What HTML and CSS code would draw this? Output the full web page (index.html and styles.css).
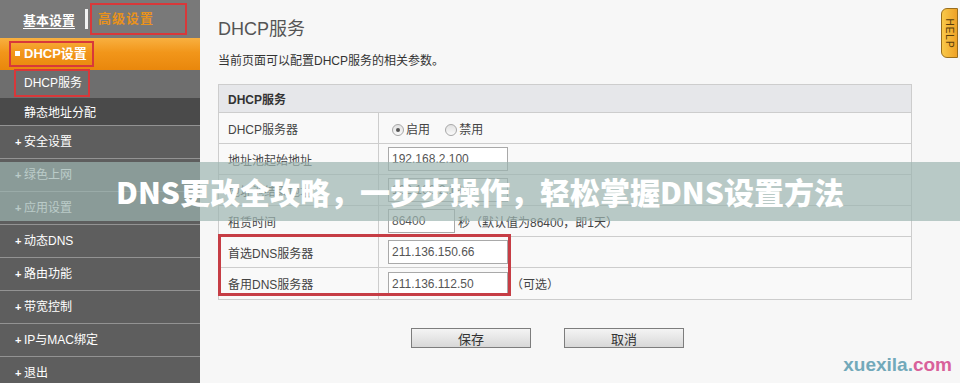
FILE: index.html
```html
<!DOCTYPE html>
<html lang="zh-CN">
<head>
    <meta charset="UTF-8">
    <title>DHCP服务</title>
    <link rel="stylesheet" href="styles.css">
</head>
<body>

    <aside class="sidebar">
        <div class="tabs">
            <span class="tab-basic">基本设置</span>
            <span class="tab-sep"></span>
            <span class="tab-adv mark">高级设置</span>
        </div>
        <div class="menu-active">
            <span class="mark"><i class="square"></i>DHCP设置</span>
        </div>
        <div class="sub-item sub-current"><span class="mark">DHCP服务</span></div>
        <div class="sub-item sub-dark">静态地址分配</div>
        <div class="menu-item">安全设置</div>
        <div class="menu-item">绿色上网</div>
        <div class="menu-item">应用设置</div>
        <div class="menu-item">动态DNS</div>
        <div class="menu-item">路由功能</div>
        <div class="menu-item">带宽控制</div>
        <div class="menu-item">IP与MAC绑定</div>
        <div class="menu-item">退出</div>
    </aside>

    <main class="content">
        <h1 class="title">DHCP服务</h1>
        <p class="intro">当前页面可以配置DHCP服务的相关参数。</p>

        <div class="table-wrap">
            <table class="form-table">
                <tr class="head-row">
                    <th colspan="2">DHCP服务</th>
                </tr>
                <tr>
                    <td class="label">DHCP服务器</td>
                    <td>
                        <span class="radio on"></span><span class="radio-text">启用</span>
                        <span class="radio"></span><span class="radio-text">禁用</span>
                    </td>
                </tr>
                <tr>
                    <td class="label">地址池起始地址</td>
                    <td><span class="field">192.168.2.100</span></td>
                </tr>
                <tr>
                    <td class="label">地址池结束地址</td>
                    <td><span class="field">192.168.2.199</span></td>
                </tr>
                <tr>
                    <td class="label">租赁时间</td>
                    <td><span class="field short">86400</span><span class="note">秒（默认值为86400，即1天）</span></td>
                </tr>
                <tr>
                    <td class="label">首选DNS服务器</td>
                    <td><span class="field">211.136.150.66</span></td>
                </tr>
                <tr class="last-row">
                    <td class="label">备用DNS服务器</td>
                    <td><span class="field">211.136.112.50</span><span class="note">（可选）</span></td>
                </tr>
            </table>
            <div class="dns-mark"></div>
        </div>

        <div class="buttons">
            <button class="btn">保存</button>
            <button class="btn">取消</button>
        </div>
    </main>

    <div class="help-tab"><span>HELP</span></div>

    <div class="banner">DNS更改全攻略，一步步操作，轻松掌握DNS设置方法</div>

    <div class="watermark"><span class="wm-a">xuexila.</span><span class="wm-b">com</span></div>

</body>
</html>
```

FILE: styles.css
```css
body {
    margin: 0;
    display: flex;
    height: 383px;
    overflow: hidden;
    background-color: #f7f7f7;
    font-family: 'Liberation Sans', Arial, 'Noto Sans CJK SC', sans-serif;
    font-size: 12px;
    color: #333;
}

/* barra lateral */
.sidebar {
    width: 200px;
    flex-shrink: 0;
    background-color: #5e5e5e;
    color: #fff;
}
.tabs {
    height: 38px;
    background-color: #797979;
    display: flex;
    align-items: center;
    padding-left: 23px;
}
.tab-basic {
    font-size: 13px;
    font-weight: bold;
    text-decoration: underline;
    text-underline-offset: 3px;
}
.tab-sep {
    width: 3px;
    height: 20px;
    background-color: #f2f2f2;
    margin: 0 2px 0 10px;
}
.mark {
    display: inline-block;
    border: 2px solid #d8383a;
}
.tab-adv {
    width: 87px;
    height: 28px;
    line-height: 28px;
    padding-left: 6px;
    box-sizing: content-box;
    color: #e8921c;
    font-size: 13px;
    font-weight: bold;
    letter-spacing: 1px;
}
.menu-active {
    height: 32px;
    background: linear-gradient(#f8b040, #f2961a 45%, #e9870c);
    display: flex;
    align-items: center;
    padding-left: 9px;
}
.menu-active .mark {
    height: 22px;
    line-height: 22px;
    padding: 0 5px 0 4px;
    font-size: 13px;
    font-weight: bold;
}
.square {
    display: inline-block;
    width: 5px;
    height: 5px;
    background-color: #fff;
    margin-right: 4px;
    vertical-align: 2px;
}
.sub-item {
    display: flex;
    align-items: center;
    padding-left: 24px;
}
.sub-current {
    height: 28px;
    background-color: #6e6e6e;
    padding-left: 14px;
}
.sub-current .mark {
    height: 24px;
    line-height: 24px;
    padding: 0 6px 0 8px;
    margin-top: -2px;
}
.sub-dark {
    height: 27px;
    background-color: #4a4a4a;
}
.menu-item {
    height: 32px;
    line-height: 32px;
    border-top: 1px solid #939393;
    padding-left: 15px;
}
.menu-item::before {
    content: "+";
    display: inline-block;
    width: 9px;
    font-weight: bold;
    font-size: 11px;
}

/* contenido */
.content {
    flex: 1;
    padding: 18px 48px 0 18px;
}
.title {
    margin: 0;
    font-size: 18px;
    line-height: 22px;
    font-weight: normal;
    color: #555;
}
.intro {
    margin: 13px 0 0;
    line-height: 16px;
}
.table-wrap {
    position: relative;
    margin-top: 15px;
}
.form-table {
    width: 694px;
    border-collapse: collapse;
    background-color: #f9f9f9;
}
.form-table th, .form-table td {
    border: 1px solid #cdcdcd;
    padding: 0 9px;
    text-align: left;
    height: 30px;
    color: #444;
}
.form-table th {
    height: 27px;
    background-color: #e6e7ea;
    font-weight: bold;
    color: #333;
}
.form-table td.label {
    width: 141px;
}
.form-table .last-row td {
    height: 31px;
}
.radio {
    display: inline-block;
    width: 10px;
    height: 10px;
    border: 1px solid #a8a8a8;
    border-radius: 50%;
    background: linear-gradient(#e2e2e2, #fafafa);
    vertical-align: -2px;
    margin: 0 2px 0 4px;
    position: relative;
}
.radio.on::after {
    content: "";
    position: absolute;
    left: 3px;
    top: 3px;
    width: 4px;
    height: 4px;
    border-radius: 50%;
    background-color: #555;
}
.radio-text {
    margin-right: 8px;
}
.field {
    display: inline-block;
    width: 115px;
    height: 22px;
    line-height: 22px;
    border: 1px solid #a9a9a9;
    background-color: #fff;
    padding-left: 3px;
    color: #555;
    font-size: 12px;
    vertical-align: middle;
}
.field.short {
    width: 62px;
}
.note {
    vertical-align: middle;
    margin-left: 3px;
    color: #444;
}
.dns-mark {
    position: absolute;
    left: 0;
    top: 150px;
    width: 287px;
    height: 56px;
    border: 3px solid #c63d45;
}
.buttons {
    display: flex;
    gap: 33px;
    padding-left: 193px;
    margin-top: 28px;
}
.btn {
    width: 120px;
    height: 20px;
    padding: 0;
    border: 1px solid #7d7d7d;
    background: linear-gradient(#f4f4f4, #d8d8d8);
    font-family: 'Liberation Sans', 'Noto Sans CJK SC', sans-serif;
    font-size: 13px;
    color: #333;
}

/* capas superiores */
.help-tab {
    position: absolute;
    top: 8px;
    right: 2px;
    width: 15px;
    height: 48px;
    border: 1px solid #9a6e1c;
    border-radius: 6px 0 0 6px;
    background: linear-gradient(90deg, #f9c94a, #eea126);
    display: flex;
    align-items: center;
    justify-content: center;
}
.help-tab span {
    transform: rotate(90deg);
    font-size: 10px;
    color: #5a3d0c;
    letter-spacing: 1px;
}
.banner {
    position: absolute;
    left: 0;
    right: 0;
    top: 162px;
    height: 59px;
    line-height: 59px;
    background-color: rgba(157, 181, 176, 0.7);
    color: #fff;
    text-align: center;
    font-family: 'Noto Sans CJK SC', sans-serif;
    font-size: 30px;
    font-weight: 900;
}
.watermark {
    position: absolute;
    right: 8px;
    bottom: 7px;
    font-family: 'Liberation Sans', Arial, sans-serif;
    font-size: 19px;
    font-weight: bold;
}
.wm-a {
    color: #72a9ba;
}
.wm-b {
    color: #d8619a;
}
```
